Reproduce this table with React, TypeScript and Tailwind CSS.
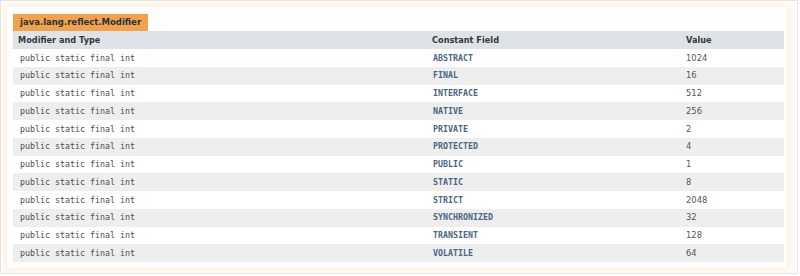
const rows: [string, string][] = [
  ["ABSTRACT", "1024"],
  ["FINAL", "16"],
  ["INTERFACE", "512"],
  ["NATIVE", "256"],
  ["PRIVATE", "2"],
  ["PROTECTED", "4"],
  ["PUBLIC", "1"],
  ["STATIC", "8"],
  ["STRICT", "2048"],
  ["SYNCHRONIZED", "32"],
  ["TRANSIENT", "128"],
  ["VOLATILE", "64"],
];

const sans = "font-['DejaVu_Sans',sans-serif]";
const mono = "font-['DejaVu_Sans_Mono',monospace]";

export default function App() {
  return (
    <div className="h-[276px] w-[800px] bg-white">
      <div className="h-[274px] w-[798px] border border-[#e6e6e6] bg-white pl-[6px] pt-[6px]">
        <div className="w-[780px] bg-white px-[6px] pt-[7px] pb-[6px] shadow-[0_0_7px_3px_rgba(248,152,29,0.16)]">
          <div
            className={`flex h-[17px] w-fit items-center bg-[#f3a24b] px-[7px] text-[8.5px] font-bold text-[#253441] ${sans}`}
          >
            java.lang.reflect.Modifier
          </div>
          <div className="grid grid-cols-[414px_254px_103px]">
            <div className={`flex h-[18px] items-center bg-[#dee3e9] pl-[5px] text-[8.2px] font-bold text-[#353833] ${sans}`}>
              Modifier and Type
            </div>
            <div className={`flex h-[18px] items-center bg-[#dee3e9] pl-[5px] text-[8.2px] font-bold text-[#353833] ${sans}`}>
              Constant Field
            </div>
            <div className={`flex h-[18px] items-center bg-[#dee3e9] pl-[5px] text-[8.2px] font-bold text-[#353833] ${sans}`}>
              Value
            </div>
            {rows.map(([name, value], i) => {
              const bg = i % 2 === 0 ? "bg-white" : "bg-[#eeeeef]";
              return [
                <div
                  key={name + "t"}
                  className={`flex h-[17.75px] items-center pl-[7px] text-[8.3px] text-[#4d4d4d] ${mono} ${bg}`}
                >
                  public static final int
                </div>,
                <div
                  key={name + "n"}
                  className={`flex h-[17.75px] items-center pl-[6px] text-[8.3px] font-bold text-[#4a6782] ${mono} ${bg}`}
                >
                  {name}
                </div>,
                <div
                  key={name + "v"}
                  className={`flex h-[17.75px] items-center pl-[5px] text-[8.4px] text-[#555555] ${sans} ${bg}`}
                >
                  {value}
                </div>,
              ];
            })}
          </div>
        </div>
      </div>
    </div>
  );
}
